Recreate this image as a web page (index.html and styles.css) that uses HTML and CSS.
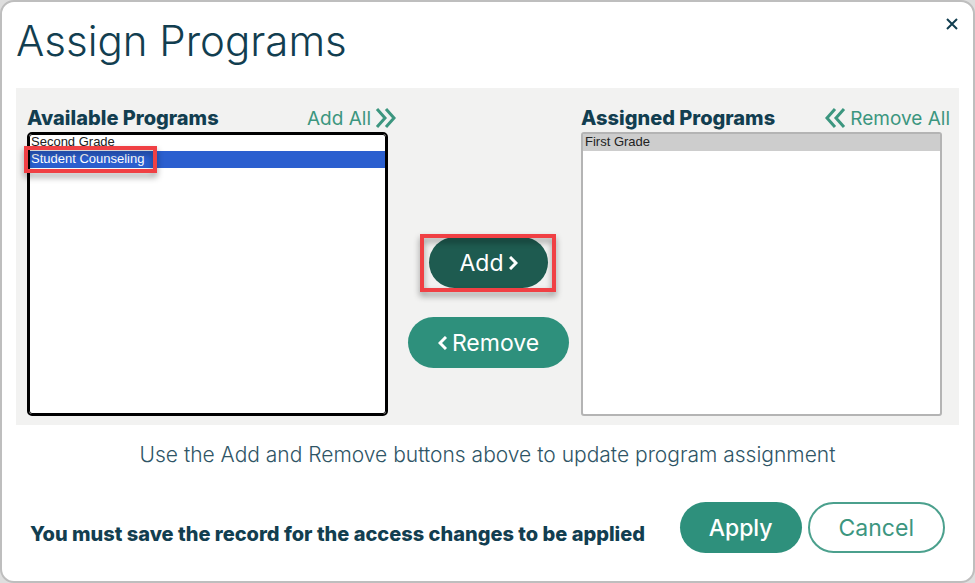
FILE: index.html
```html
<!DOCTYPE html>
<html lang="en">
<head>
<meta charset="utf-8">
<title>Assign Programs</title>
<link rel="stylesheet" href="styles.css">
</head>
<body>
<main class="dialog">
  <header class="dialog-header">
    <h1>Assign Programs</h1>
    <button class="close" type="button" aria-label="Close">
      <svg width="12" height="12" viewBox="0 0 12 12"><path d="M1 1L11 11M11 1L1 11"/></svg>
    </button>
  </header>

  <section class="panel">
    <div class="column">
      <div class="column-header">
        <label for="available">Available Programs</label>
        <a class="bulk" href="#">Add All
          <svg width="21" height="20" viewBox="0 0 21 20"><path d="M2 1L10 10L2 19M11 1L19 10L11 19"/></svg>
        </a>
      </div>
      <div class="list-wrap">
        <select class="list list-active" id="available" multiple>
          <option>Second Grade</option>
          <option selected>Student Counseling</option>
        </select>
        <span class="callout callout-option"></span>
      </div>
    </div>

    <div class="actions">
      <div class="action-wrap">
        <button class="pill pill-dark" type="button">Add
          <svg width="9" height="14" viewBox="0 0 9 14"><path d="M1 1L7 7L1 13"/></svg>
        </button>
        <span class="callout callout-add"></span>
      </div>
      <button class="pill" type="button">
        <svg width="9" height="14" viewBox="0 0 9 14"><path d="M8 1L2 7L8 13"/></svg>
        Remove</button>
    </div>

    <div class="column">
      <div class="column-header">
        <label for="assigned">Assigned Programs</label>
        <a class="bulk" href="#">
          <svg width="21" height="20" viewBox="0 0 21 20"><path d="M10 1L2 10L10 19M19 1L11 10L19 19"/></svg>
          Remove All</a>
      </div>
      <div class="list-wrap">
        <select class="list" id="assigned" multiple>
          <option selected>First Grade</option>
        </select>
      </div>
    </div>
  </section>

  <p class="hint">Use the Add and Remove buttons above to update program assignment</p>

  <footer class="dialog-footer">
    <p class="notice">You must save the record for the access changes to be applied</p>
    <div class="footer-actions">
      <button class="pill pill-apply" type="button">Apply</button>
      <button class="pill pill-outline" type="button">Cancel</button>
    </div>
  </footer>
</main>
</body>
</html>
```
FILE: styles.css
```css
* {
  box-sizing: border-box;
}

body {
  margin: 0;
  background: #dedede;
  color: #123e50;
  font-family: Inter, "Liberation Sans", sans-serif;
  font-size: 20px;
}

h1,
p {
  margin: 0;
}

svg {
  fill: none;
  stroke: currentColor;
  stroke-width: 2;
  flex: none;
}

.dialog {
  min-height: 100vh;
  padding: 0 14px;
  background: #fff;
  border: 2px solid #bebebe;
  border-radius: 14px;
}

.dialog-header {
  display: flex;
  justify-content: space-between;
  align-items: flex-start;
  height: 86px;
  padding-top: 14px;
}

h1 {
  font-size: 42px;
  line-height: 50px;
  font-weight: 300;
}

.close {
  display: flex;
  padding: 2px 1px;
  border: 0;
  background: none;
  color: #123e50;
}

.panel {
  display: grid;
  grid-template-columns: 1fr 185px 1fr;
  padding: 16px 9px 9px 11px;
  background: #f2f2f1;
}

.column-header {
  display: flex;
  justify-content: space-between;
  align-items: center;
  height: 28px;
  white-space: nowrap;
}

.column-header label {
  font-weight: 800;
}

.bulk {
  display: flex;
  align-items: center;
  gap: 4px;
  color: #3c967f;
  font-size: 19px;
  text-decoration: none;
}

.bulk svg {
  stroke-width: 3;
}

.list-wrap {
  position: relative;
  margin-right: 8px;
}

.list {
  display: block;
  width: 100%;
  height: 284px;
  padding: 0;
  border: 2px solid #b4b4b4;
  border-radius: 3px;
  outline: 0;
  background: #fff;
  font-family: "Liberation Sans", sans-serif;
  font-size: 13px;
  overflow: hidden;
}

.list-active {
  border-color: #000;
  border-radius: 5px;
  outline: 1px solid #000;
  outline-offset: -3px;
}

.list option {
  min-height: 17px;
  padding: 0 2px;
  line-height: 14px;
  color: #222;
}

.list option:checked {
  background: #cdcdcd linear-gradient(#cdcdcd, #cdcdcd);
}

.list-active option:checked {
  background: #2b5fcf linear-gradient(#2b5fcf, #2b5fcf);
  color: #fff;
  -webkit-text-fill-color: #fff;
}

.callout {
  position: absolute;
  border: 4px solid #f04044;
  filter: drop-shadow(0 4px 3px #0006);
  pointer-events: none;
}

.callout-option {
  top: 14px;
  left: -3px;
  width: 133px;
  height: 27px;
}

.callout-add {
  inset: -3px -8px -4px -9px;
}

.actions {
  display: flex;
  flex-direction: column;
  align-items: center;
  gap: 29px;
  padding-top: 133px;
}

.action-wrap {
  position: relative;
}

.pill {
  display: flex;
  align-items: center;
  justify-content: center;
  gap: 5px;
  height: 51px;
  padding: 0 30px;
  border: 0;
  border-radius: 26px;
  background: #2e907c;
  color: #fff;
  font: 400 23px/28px Inter, "Liberation Sans", sans-serif;
}

.pill svg {
  stroke-width: 3;
}

.pill-dark {
  background: #1e5b50;
}

.footer-actions .pill {
  padding: 0 29px;
}

.pill-apply {
  font-weight: 500;
}

.pill-outline {
  border: 2px solid #4ba08d;
  background: #fff;
  color: #3c967f;
}

.hint {
  padding-top: 16px;
  color: #2f5566;
  font-size: 21px;
  line-height: 28px;
  font-weight: 300;
  text-align: center;
}

.dialog-footer {
  display: flex;
  justify-content: space-between;
  align-items: center;
  gap: 12px;
  padding: 33px 14px 28px;
}

.notice {
  padding-top: 12px;
  line-height: 28px;
  font-weight: 800;
}

.footer-actions {
  display: flex;
  gap: 6px;
}
```
